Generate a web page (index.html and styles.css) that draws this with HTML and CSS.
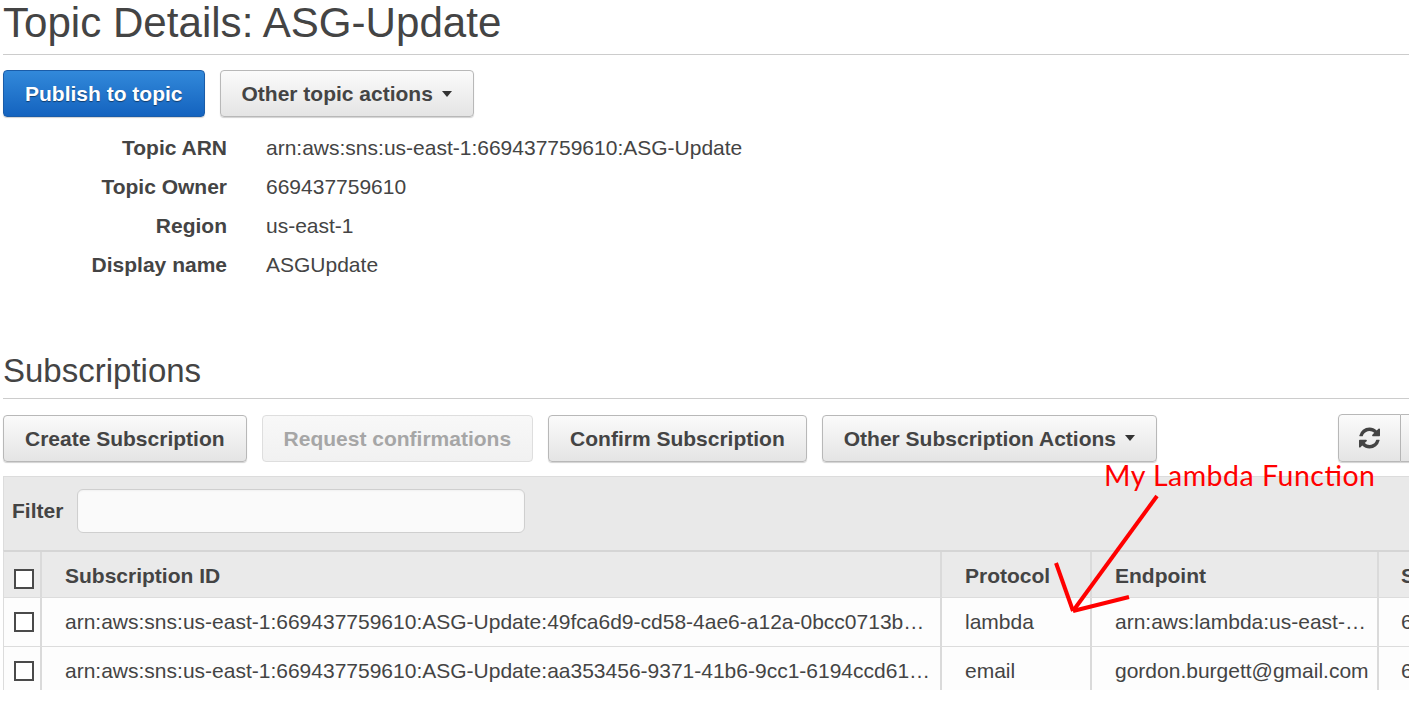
FILE: index.html
```html
<!DOCTYPE html>
<html lang="en">
<head>
<meta charset="utf-8">
<title>Topic Details: ASG-Update</title>
<link rel="stylesheet" href="styles.css">
</head>
<body>
<div class="page">
  <div class="page-header">
    <h1 class="title">Topic Details: ASG-Update</h1>
  </div>

  <div class="toolbar top-actions">
    <button class="btn btn-primary">Publish to topic</button>
    <button class="btn">Other topic actions<span class="caret"></span></button>
  </div>

  <dl class="details">
    <dt>Topic ARN</dt><dd>arn:aws:sns:us-east-1:669437759610:ASG-Update</dd>
    <dt>Topic Owner</dt><dd>669437759610</dd>
    <dt>Region</dt><dd>us-east-1</dd>
    <dt>Display name</dt><dd>ASGUpdate</dd>
  </dl>

  <div class="section-header">
    <h2 class="section-title">Subscriptions</h2>
  </div>

  <div class="toolbar sub-actions">
    <button class="btn">Create Subscription</button>
    <button class="btn" disabled>Request confirmations</button>
    <button class="btn">Confirm Subscription</button>
    <button class="btn">Other Subscription Actions<span class="caret"></span></button>
    <div class="btn-group">
      <button class="btn btn-icon" aria-label="Refresh">
        <svg class="icon" viewBox="0 128 1536 1536"><path d="M1511 1056q0 5-1 7-64 268-268 434.5t-478 166.5q-146 0-282.5-55t-243.5-157l-129 129q-19 19-45 19t-45-19-19-45v-448q0-26 19-45t45-19h448q26 0 45 19t19 45-19 45l-137 137q71 66 161 102t187 36q134 0 250-65t186-179q11-17 53-117 8-23 30-23h192q13 0 22.5 9.5t9.5 22.5zm25-800v448q0 26-19 45t-45 19h-448q-26 0-45-19t-19-45 19-45l138-138q-148-137-349-137-134 0-250 65t-186 179q-11 17-53 117-8 23-30 23h-199q-13 0-22.5-9.5t-9.5-22.5v-7q65-268 270-434.5t480-166.5q146 0 284 55.5t245 156.5l130-129q19-19 45-19t45 19 19 45z"/></svg>
      </button>
      <button class="btn btn-icon" aria-label="Settings">
        <svg class="icon" viewBox="0 0 24 24"><circle cx="12" cy="12" r="7" fill="none" stroke="#444" stroke-width="4"/></svg>
      </button>
    </div>
  </div>

  <div class="filter-bar">
    <label class="filter-label" for="filter">Filter</label>
    <input class="filter-input" id="filter" type="text">
  </div>

  <div class="table">
    <div class="row head">
      <div class="cell cb-cell"><input type="checkbox" class="cb"></div>
      <div class="cell">Subscription ID</div>
      <div class="cell">Protocol</div>
      <div class="cell">Endpoint</div>
      <div class="cell last">Subscriber</div>
    </div>
    <div class="row">
      <div class="cell cb-cell"><input type="checkbox" class="cb"></div>
      <div class="cell">arn:aws:sns:us-east-1:669437759610:ASG-Update:49fca6d9-cd58-4ae6-a12a-0bcc0713b…</div>
      <div class="cell">lambda</div>
      <div class="cell">arn:aws:lambda:us-east-…</div>
      <div class="cell last">669437759610</div>
    </div>
    <div class="row">
      <div class="cell cb-cell"><input type="checkbox" class="cb"></div>
      <div class="cell">arn:aws:sns:us-east-1:669437759610:ASG-Update:aa353456-9371-41b6-9cc1-6194ccd61…</div>
      <div class="cell">email</div>
      <div class="cell">gordon.burgett@gmail.com</div>
      <div class="cell last">669437759610</div>
    </div>
  </div>
</div>

<svg class="annotation" viewBox="0 0 1409 727" width="1409" height="727">
  <text x="1104" y="486" class="annotation-text" textLength="271">My Lambda Function</text>
  <g stroke="#ff0000" stroke-width="4" stroke-linecap="butt" fill="none">
    <line x1="1157" y1="496" x2="1073" y2="611"/>
    <line x1="1056" y1="563" x2="1073" y2="611"/>
    <line x1="1073" y1="611" x2="1129" y2="597"/>
  </g>
</svg>
</body>
</html>
```

FILE: styles.css
```css
html, body {
  margin: 0;
  padding: 0;
  background: #ffffff;
}

body {
  width: 1409px;
  height: 727px;
  overflow: hidden;
  position: relative;
  font-family: "Liberation Sans", Arial, sans-serif;
  font-size: 21px;
  color: #444444;
}

.page {
  width: 1461px;
  padding-left: 3px;
}

/* Header */
.page-header {
  border-bottom: 1px solid #cccccc;
  padding-bottom: 8px;
}

.title {
  margin: 0;
  font-size: 42.1px;
  font-weight: normal;
  line-height: 46px;
  color: #444444;
}

/* Toolbars / buttons */
.toolbar {
  display: flex;
  align-items: center;
}

.top-actions {
  gap: 15px;
  margin-top: 15px;
}

.sub-actions {
  gap: 15px;
  margin-top: 15px;
}

.btn {
  display: inline-flex;
  align-items: center;
  font-family: "Liberation Sans", Arial, sans-serif;
  font-size: 21px;
  font-weight: bold;
  line-height: 23px;
  padding: 11px 21px;
  border: 1px solid #b8b8b8;
  border-radius: 4px;
  background: linear-gradient(#fbfbfb, #e4e4e4);
  color: #444444;
  box-shadow: 0 1px 1px rgba(0, 0, 0, 0.18);
  cursor: pointer;
  white-space: nowrap;
}

.btn-primary {
  background: linear-gradient(#3289da, #1463bf);
  border-color: #1a5ca8;
  color: #ffffff;
  text-shadow: 0 1px 1px rgba(0, 0, 0, 0.45);
}

.btn:disabled {
  background: linear-gradient(#f8f8f8, #f1f1f1);
  border-color: #dedede;
  color: #a6a6a6;
  box-shadow: none;
}

.caret {
  display: inline-block;
  width: 0;
  height: 0;
  margin-left: 9px;
  border-left: 5.5px solid transparent;
  border-right: 5.5px solid transparent;
  border-top: 6px solid #333333;
}

.btn-group {
  display: flex;
  margin-left: auto;
}

.btn-icon {
  padding: 12px 20px;
  width: 63px;
  justify-content: center;
}

.btn-group .btn-icon:first-child {
  border-top-right-radius: 0;
  border-bottom-right-radius: 0;
}

.btn-group .btn-icon:last-child {
  border-top-left-radius: 0;
  border-bottom-left-radius: 0;
  border-left: none;
}

.icon {
  width: 22px;
  height: 22px;
  fill: #444444;
  display: block;
}

/* Details list */
.details {
  display: grid;
  grid-template-columns: 224px max-content;
  column-gap: 39px;
  margin: 11px 0 0;
  line-height: 39px;
}

.details dt {
  font-weight: bold;
  text-align: right;
}

.details dd {
  margin: 0;
}

/* Subscriptions section */
.section-header {
  margin-top: 68px;
  border-bottom: 1px solid #cccccc;
  padding-bottom: 8px;
}

.section-title {
  margin: 0;
  font-size: 33px;
  font-weight: normal;
  line-height: 38px;
  color: #444444;
}

/* Filter */
.filter-bar {
  margin-top: 14px;
  display: flex;
  align-items: center;
  gap: 14px;
  background: #e9e9e9;
  border-top: 1px solid #dcdcdc;
  border-left: 1px solid #dcdcdc;
  padding: 12px 0 17px 8px;
}

.filter-label {
  font-weight: bold;
}

.filter-input {
  box-sizing: border-box;
  width: 448px;
  height: 44px;
  border: 1px solid #cfcfcf;
  border-radius: 6px;
  background: #fafafa;
  box-shadow: inset 0 1px 2px rgba(0, 0, 0, 0.04);
  margin: 0;
}

/* Table */
.table {
  border-top: 2px solid #d5d5d5;
  border-left: 1px solid #dcdcdc;
  height: 138px;
  overflow: hidden;
}

.row {
  display: grid;
  grid-template-columns: 38px 900px 150px 287px 85px;
  border-bottom: 1px solid #dcdcdc;
  background: #fdfdfd;
  height: 48px;
  line-height: 47px;
}

.row.head {
  background: #eaeaea;
  height: 45px;
  line-height: 47px;
  font-weight: bold;
}

.cell {
  box-sizing: border-box;
  border-right: 2px solid #dadada;
  padding: 0 3px 0 23px;
  white-space: nowrap;
  overflow: hidden;
  text-overflow: ellipsis;
}

.cell.last {
  border-right: none;
  padding-left: 22px;
}

.cb-cell {
  padding: 0 0 0 10px;
  display: flex;
  align-items: center;
}

.head .cb-cell {
  align-items: flex-start;
  padding-top: 17px;
}

.cb {
  -webkit-appearance: none;
  appearance: none;
  box-sizing: border-box;
  width: 20px;
  height: 20px;
  margin: 0;
  border: 2px solid #4a4a4a;
  background: #ffffff;
  border-radius: 0;
}

/* Annotation overlay */
.annotation {
  position: absolute;
  left: 0;
  top: 0;
  pointer-events: none;
}

.annotation-text {
  font-family: Lato, "Open Sans", sans-serif;
  font-size: 28.5px;
  fill: #ff0000;
}
```
